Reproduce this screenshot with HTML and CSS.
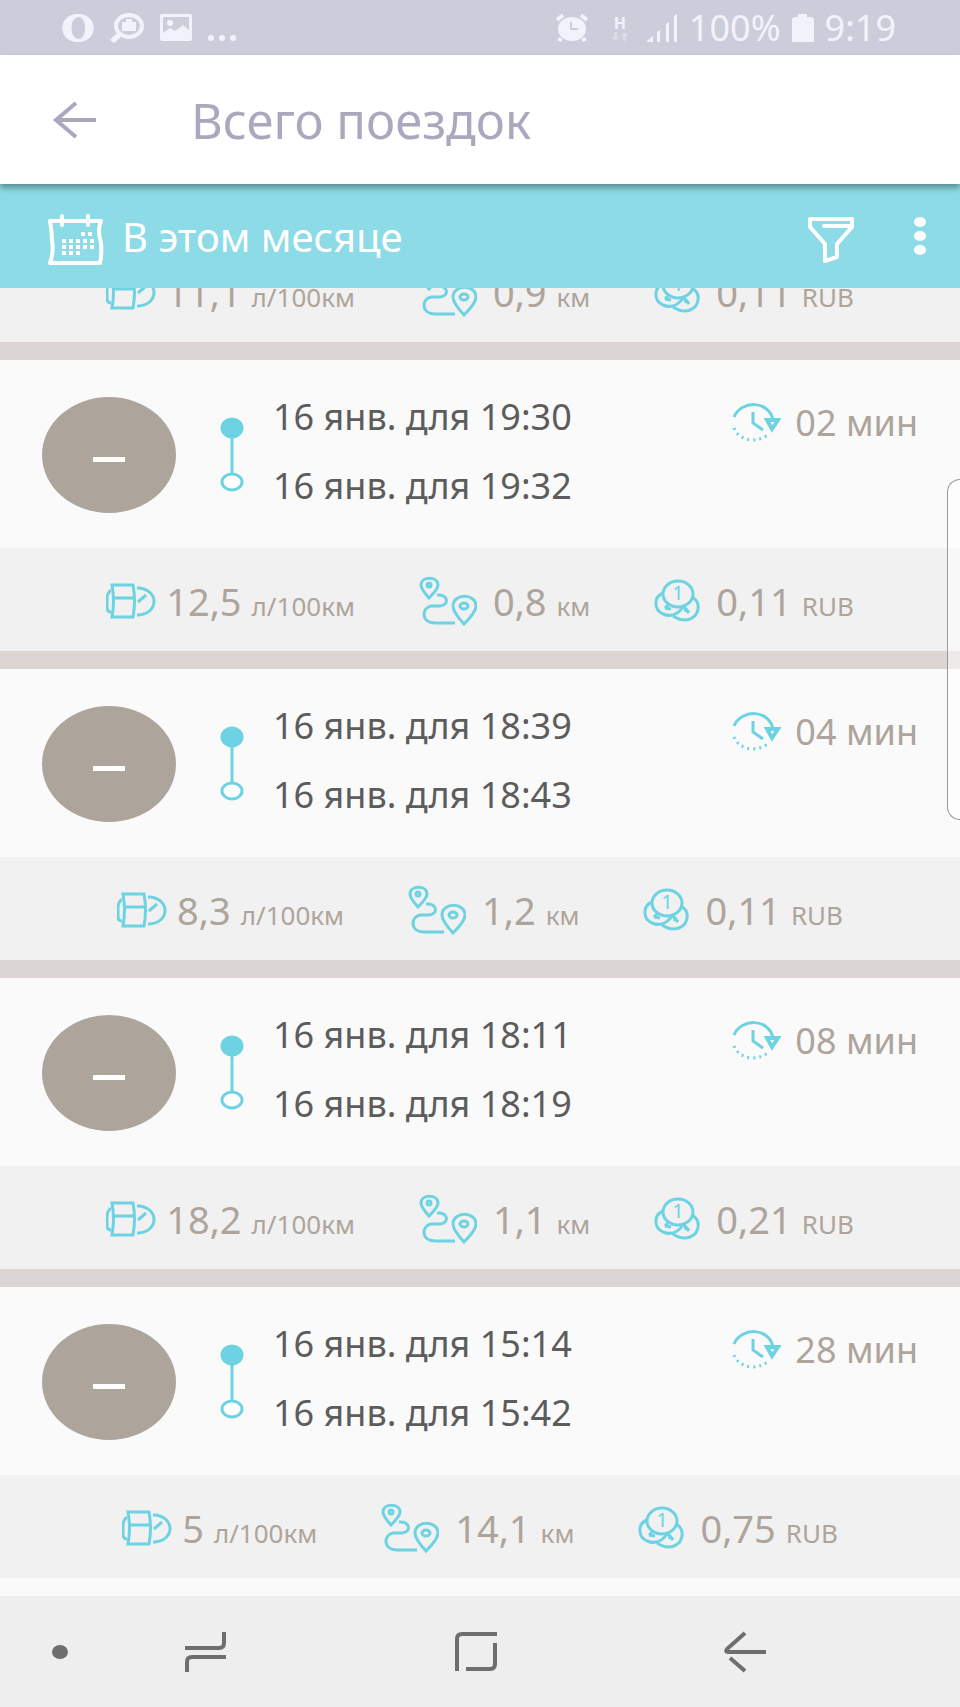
FILE: index.html
```html
<!DOCTYPE html>
<html lang="ru">
<head>
  <meta charset="UTF-8" />
  <meta name="viewport" content="width=device-width, initial-scale=1.0"/>
  <title>Всего поездок</title>
  <link rel="stylesheet" href="styles.css">
</head>
<body>
  <!-- Shared icons -->
  <svg class="sprite" aria-hidden="true">
    <symbol id="fuel" viewBox="0 0 50 36">
      <path d="M6 2h21q3 16 0 32H6q3-16 0-32zM7 15h21M5 8H4q-3 3-3 7v9q0 5 4 5M31 5h2c20 2 20 25 0 27h-2M32 19l8-7"/>
    </symbol>
    <symbol id="route" viewBox="0 0 58 50">
      <path d="M10 22Q2 13 2 9c0-9 17-9 17 0q0 4-9 13zM45 48Q34 36 34 30c0-13 23-13 23 0q0 6-12 18z"/>
      <path d="M18 19c11-1 13 10 3 11h-9c-10 2-10 17 4 17h20"/>
      <circle cx="10" cy="9" r="2"/>
      <ellipse cx="45" cy="30" rx="4" ry="3"/>
    </symbol>
    <symbol id="coins" viewBox="0 0 46 44">
      <ellipse cx="24" cy="15" rx="15" ry="13"/>
      <path d="M9 14c-10 4-9 17 0 21q12 5 21-8M38 18c9 5 8 18-2 22q-8 3-17-3M11 29l4-4M11 29l6 1M32 30l3 4M31 28l1 5"/>
      <text x="24" y="21">1</text>
    </symbol>
    <symbol id="clock" viewBox="0 0 50 40">
      <path d="M3 15C10-2 38-2 42 18M22 10v11l10 7"/>
      <path class="arrow" d="M36 18h11l-6 9z"/>
      <path class="dots" d="M3 26q4 10 17 12 11 0 18-6"/>
    </symbol>
    <symbol id="leg" viewBox="0 0 24 76">
      <path d="M12 12v44"/>
      <ellipse class="filled" cx="12" cy="11" rx="10" ry="9"/>
      <ellipse class="hollow" cx="12" cy="65" rx="10" ry="8"/>
    </symbol>
  </svg>

  <div class="status">
    <div class="status-left">
      <svg width="32" height="28" viewBox="0 0 32 28"><path fill-rule="evenodd" d="M16 0c21 0 21 28 0 28S-5 0 16 0zm1 3c-10 0-10 22 0 22 8 0 8-22 0-22z"/></svg>
      <svg width="34" height="30" viewBox="0 0 34 30"><ellipse class="line" cx="19" cy="13" rx="13" ry="11"/><path d="M12 9h4V6h6v3h4v9H12zM8 19l4 4-8 7-4-3z"/></svg>
      <svg width="32" height="27" viewBox="0 0 32 27"><path fill-rule="evenodd" d="M2 0h28q2 0 2 2v23q0 2-2 2H2q-2 0-2-2V2q0-2 2-2zm1 3v16l7-5 5 3 8-6 6 5V3z"/><circle cx="10" cy="9" r="3"/></svg>
      <svg class="more" width="28" height="6" viewBox="0 0 28 6"><circle cx="3" cy="3" r="3"/><circle cx="14" cy="3" r="3"/><circle cx="25" cy="3" r="3"/></svg>
    </div>
    <div class="status-right">
      <svg width="32" height="28" viewBox="0 0 32 28"><ellipse cx="16" cy="15" rx="14" ry="12"/><path class="line" d="M1 6l6-5M31 6l-6-5M5 24l-2 3M27 24l2 3"/><path class="hands" d="M15 8v7h7"/></svg>
      <span class="network">H<svg width="18" height="9" viewBox="0 0 18 9"><path d="M3 0h3v5h3L4 9 0 5h3zM12 9h3V4h3l-4-4-5 4h3z"/></svg></span>
      <svg width="32" height="28" viewBox="0 0 32 28"><path d="M0 28l7-6v6zM11 18l3-2v12h-3zM20 10l3-2v20h-3zM28 2l3-2v28h-3z"/></svg>
      <span>100%</span>
      <svg width="22" height="28" viewBox="0 0 22 28"><path d="M6 0h9v3h5l2 2v23H0V5l2-2h4z"/></svg>
      <span>9:19</span>
    </div>
  </div>

  <header class="header">
    <button class="back" aria-label="Назад">
      <svg width="44" height="38" viewBox="0 0 44 38"><path d="M24 2L4 19l20 17M4 19h40"/></svg>
    </button>
    <h1>Всего поездок</h1>
  </header>

  <div class="filter-bar">
    <button class="period">
      <svg class="outline" width="56" height="52" viewBox="0 0 56 52">
        <path d="M2 7h51q-4 9 0 22 1 10-1 20H2q4-11 2-22 0-10-2-20zM14 2v9M40 2v9"/>
        <path class="days" d="M33 20h13M14 27h32M14 33h32M14 39h20"/>
      </svg>
      <span>В этом месяце</span>
    </button>
    <button aria-label="Фильтр">
      <svg class="outline" width="46" height="46" viewBox="0 0 46 46"><path d="M2 2h42v8L29 27v13l-12 4V27L2 10zM16 9h26"/></svg>
    </button>
    <button class="menu" aria-label="Меню">
      <svg width="12" height="38" viewBox="0 0 12 38"><ellipse cx="6" cy="5" rx="6" ry="5"/><ellipse cx="6" cy="19" rx="6" ry="5"/><ellipse cx="6" cy="33" rx="6" ry="5"/></svg>
    </button>
  </div>

  <main class="trips">
    <!-- Scrolled partly under the filter bar -->
    <section class="trip">
      <div class="stats">
        <div class="stat"><svg class="icon fuel"><use href="#fuel"/></svg><b>11,1</b><small>л/100км</small></div>
        <div class="stat"><svg class="icon route"><use href="#route"/></svg><b>0,9</b><small>км</small></div>
        <div class="stat"><svg class="icon coins"><use href="#coins"/></svg><b>0,11</b><small>RUB</small></div>
      </div>
    </section>

    <section class="trip">
      <div class="summary">
        <div class="avatar"><span></span></div>
        <svg class="icon leg"><use href="#leg"/></svg>
        <div class="dates">
          <div>16 янв. для 19:30</div>
          <div>16 янв. для 19:32</div>
        </div>
        <div class="duration"><svg class="icon clock"><use href="#clock"/></svg>02 мин</div>
      </div>
      <div class="stats">
        <div class="stat"><svg class="icon fuel"><use href="#fuel"/></svg><b>12,5</b><small>л/100км</small></div>
        <div class="stat"><svg class="icon route"><use href="#route"/></svg><b>0,8</b><small>км</small></div>
        <div class="stat"><svg class="icon coins"><use href="#coins"/></svg><b>0,11</b><small>RUB</small></div>
      </div>
    </section>

    <section class="trip">
      <div class="summary">
        <div class="avatar"><span></span></div>
        <svg class="icon leg"><use href="#leg"/></svg>
        <div class="dates">
          <div>16 янв. для 18:39</div>
          <div>16 янв. для 18:43</div>
        </div>
        <div class="duration"><svg class="icon clock"><use href="#clock"/></svg>04 мин</div>
      </div>
      <div class="stats">
        <div class="stat"><svg class="icon fuel"><use href="#fuel"/></svg><b>8,3</b><small>л/100км</small></div>
        <div class="stat"><svg class="icon route"><use href="#route"/></svg><b>1,2</b><small>км</small></div>
        <div class="stat"><svg class="icon coins"><use href="#coins"/></svg><b>0,11</b><small>RUB</small></div>
      </div>
    </section>

    <section class="trip">
      <div class="summary">
        <div class="avatar"><span></span></div>
        <svg class="icon leg"><use href="#leg"/></svg>
        <div class="dates">
          <div>16 янв. для 18:11</div>
          <div>16 янв. для 18:19</div>
        </div>
        <div class="duration"><svg class="icon clock"><use href="#clock"/></svg>08 мин</div>
      </div>
      <div class="stats">
        <div class="stat"><svg class="icon fuel"><use href="#fuel"/></svg><b>18,2</b><small>л/100км</small></div>
        <div class="stat"><svg class="icon route"><use href="#route"/></svg><b>1,1</b><small>км</small></div>
        <div class="stat"><svg class="icon coins"><use href="#coins"/></svg><b>0,21</b><small>RUB</small></div>
      </div>
    </section>

    <section class="trip">
      <div class="summary">
        <div class="avatar"><span></span></div>
        <svg class="icon leg"><use href="#leg"/></svg>
        <div class="dates">
          <div>16 янв. для 15:14</div>
          <div>16 янв. для 15:42</div>
        </div>
        <div class="duration"><svg class="icon clock"><use href="#clock"/></svg>28 мин</div>
      </div>
      <div class="stats">
        <div class="stat"><svg class="icon fuel"><use href="#fuel"/></svg><b>5</b><small>л/100км</small></div>
        <div class="stat"><svg class="icon route"><use href="#route"/></svg><b>14,1</b><small>км</small></div>
        <div class="stat"><svg class="icon coins"><use href="#coins"/></svg><b>0,75</b><small>RUB</small></div>
      </div>
    </section>
  </main>

  <div class="edge-panel"></div>

  <nav class="nav">
    <button class="dot" aria-label="Скрыть панель"><svg width="16" height="14" viewBox="0 0 16 14"><ellipse cx="8" cy="7" rx="8" ry="7"/></svg></button>
    <button aria-label="Последние"><svg width="42" height="42" viewBox="0 0 42 42"><path d="M0 17h34q5 0 5-5V1M41 26H7q-5 0-5 5v10"/></svg></button>
    <button aria-label="Домой"><svg width="42" height="40" viewBox="0 0 42 40"><path d="M2 39V7q0-5 5-5h35M40 11v21q0 5-5 5H11"/></svg></button>
    <button aria-label="Назад"><svg width="42" height="42" viewBox="0 0 42 42"><path d="M21 2L3 18q-2 3 1 3h38M6 27l15 13"/></svg></button>
  </nav>
</body>
</html>
```

FILE: styles.css
```css
* {
  box-sizing: border-box;
}

body {
  margin: 0;
  min-height: 100vh;
  display: flex;
  flex-direction: column;
  position: relative;
  font-family: "Noto Sans", sans-serif;
  background-color: #fafafa;
}

button {
  display: flex;
  align-items: center;
  padding: 0;
  border: 0;
  background: none;
  font: inherit;
  color: inherit;
}

svg {
  display: block;
  flex: none;
}

.sprite {
  display: none;
}

/* Status bar */
.status {
  height: 55px;
  padding: 0 64px 0 62px;
  display: flex;
  align-items: center;
  justify-content: space-between;
  background-color: #cccddb;
  color: #f2f3fa;
  fill: #f2f3fa;
  font-size: 36px;
}

.status-left, .status-right {
  display: flex;
  align-items: center;
  gap: 16px;
}

.status-right {
  gap: 11px;
}

.status .more {
  margin-top: 20px;
}

.status .line {
  fill: none;
  stroke: #f2f3fa;
  stroke-width: 4;
}

.status .hands {
  fill: none;
  stroke: #cccddb;
  stroke-width: 2;
}

.network {
  display: flex;
  flex-direction: column;
  align-items: center;
  margin: 0 6px 0 12px;
  font-size: 16px;
  font-weight: bold;
  line-height: 18px;
}

.network svg {
  opacity: 0.4;
}

/* Title bar */
.header {
  position: relative;
  z-index: 2;
  height: 129px;
  padding: 0 52px;
  display: flex;
  align-items: center;
  gap: 95px;
  background-color: #ffffff;
  color: #aba8be;
  box-shadow: 0 4px 6px rgba(0, 0, 0, 0.35);
}

.header path {
  fill: none;
  stroke: #aba8be;
  stroke-width: 4;
}

.header h1 {
  margin: 0;
  font-size: 49px;
  font-weight: normal;
}

.filter-bar {
  position: relative;
  z-index: 1;
  height: 104px;
  padding: 0 34px 0 48px;
  display: flex;
  align-items: center;
  background-color: #8cdbe6;
  color: #ffffff;
  fill: #ffffff;
}

.outline {
  margin-top: 8px;
  fill: none;
  stroke: #ffffff;
  stroke-width: 4;
  stroke-linejoin: round;
  stroke-linecap: round;
}

.outline .days {
  stroke-linecap: butt;
  stroke-dasharray: 4 3;
}

.period {
  flex: 1;
  gap: 18px;
  font-size: 40px;
}

.menu {
  margin-left: 60px;
}

/* Trips */
.trips {
  flex: 1;
  margin-top: -49px;
  padding-bottom: 18px;
}

.trip + .trip {
  border-top: 18px solid #dbd6d3;
}

.summary {
  height: 188px;
  padding: 2px 42px 0;
  display: flex;
  align-items: center;
}

.avatar {
  width: 134px;
  height: 116px;
  padding-top: 9px;
  margin-right: 44px;
  display: flex;
  align-items: center;
  justify-content: center;
  border-radius: 50%;
  background-color: #ada59c;
}

.avatar span {
  width: 32px;
  height: 5px;
  background-color: #ffffff;
}

.dates {
  flex: 1;
  padding: 0 0 8px 29px;
  font-size: 36px;
  line-height: 69px;
  color: #5c5c5c;
}

.duration {
  align-self: flex-start;
  height: 120px;
  display: flex;
  align-items: center;
  gap: 14px;
  font-size: 36px;
  color: #ada59c;
}

.stats {
  height: 103px;
  padding-top: 2px;
  display: flex;
  align-items: center;
  justify-content: center;
  gap: 64px;
  background-color: #f1f1f1;
  color: #ada59c;
}

.stat {
  display: flex;
  align-items: baseline;
}

.stat b {
  margin-left: 16px;
  font-size: 38px;
  font-weight: normal;
}

.stat .fuel + b {
  margin-left: 10px;
}

.stat small {
  margin-left: 10px;
  font-size: 26px;
}

.stat .icon {
  align-self: center;
}

.icon {
  fill: none;
  stroke: #6dd3e3;
  stroke-width: 3;
}

.fuel {
  width: 50px;
  height: 36px;
}

.route {
  width: 58px;
  height: 50px;
}

.coins {
  width: 46px;
  height: 44px;
}

.clock {
  width: 50px;
  height: 40px;
}

.leg {
  width: 24px;
  height: 76px;
}

symbol text {
  fill: #6dd3e3;
  stroke: none;
  font-size: 20px;
  text-anchor: middle;
}

.arrow {
  stroke-width: 4;
}

.dots {
  stroke-dasharray: 2 4;
}

.filled {
  fill: #6dd3e3;
}

.hollow {
  fill: #ffffff;
}

/* Edge panel handle */
.edge-panel {
  position: absolute;
  top: 479px;
  right: 0;
  width: 13px;
  height: 341px;
  border: 1px solid #999999;
  border-right: 0;
  border-radius: 13px 0 0 13px;
  background-color: rgba(255, 255, 255, 0.5);
}

/* Navigation bar */
.nav {
  height: 111px;
  padding: 0 194px 0 52px;
  display: flex;
  align-items: center;
  justify-content: space-between;
  background-color: #eeeeee;
}

.nav path {
  fill: none;
  stroke: #6e6e6e;
  stroke-width: 4;
}

.nav ellipse {
  fill: #6e6e6e;
}

.nav .dot {
  margin-right: -110px;
}
```
